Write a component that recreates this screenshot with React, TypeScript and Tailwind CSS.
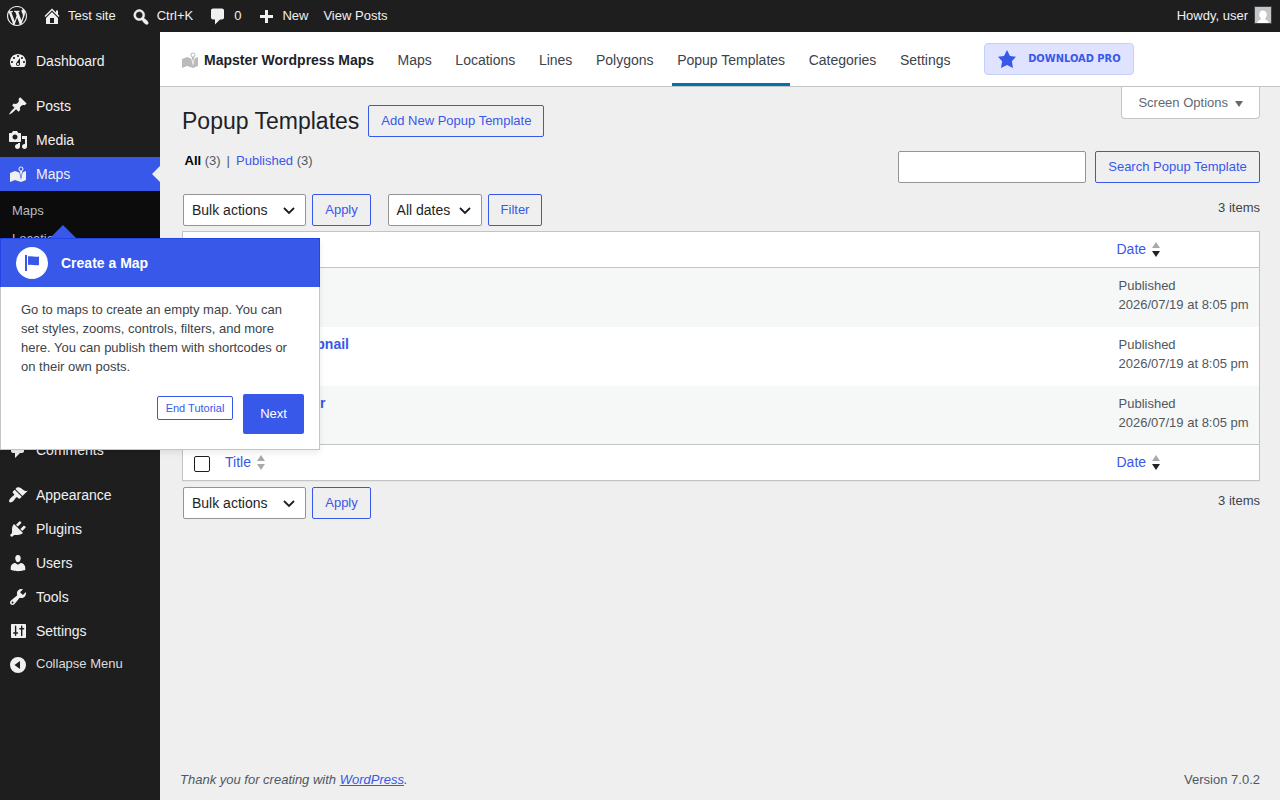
import React from 'react';
import clsx from 'clsx';

const ICONS = {
  wordpress:
    'M20 10c0-5.51-4.49-10-10-10C4.48 0 0 4.49 0 10c0 5.52 4.48 10 10 10 5.51 0 10-4.48 10-10zM7.78 15.37L4.37 6.22c.55-.02 1.17-.08 1.17-.08.5-.06.44-1.13-.06-1.11 0 0-1.45.11-2.37.11-.18 0-.37 0-.58-.01C4.12 2.69 6.87 1.11 10 1.11c2.33 0 4.45.87 6.05 2.34-.68-.11-1.65.39-1.65 1.58 0 .74.45 1.36.9 2.1.35.61.55 1.36.55 2.46 0 1.49-1.4 5-1.4 5l-3.03-8.37c.54-.02.82-.17.82-.17.5-.05.44-1.25-.06-1.22 0 0-1.44.12-2.38.12-.87 0-2.33-.12-2.33-.12-.5-.03-.56 1.2-.06 1.22l.92.08 1.26 3.41zM17.41 10c.24-.64.74-1.87.43-4.25.7 1.29 1.05 2.71 1.05 4.25 0 3.29-1.73 6.24-4.4 7.78.97-2.59 1.94-5.2 2.92-7.78zM6.1 18.09C3.12 16.65 1.11 13.53 1.11 10c0-1.3.23-2.48.72-3.59C3.25 10.3 4.67 14.2 6.1 18.09zm4.03-6.63l2.58 6.98c-.86.29-1.76.45-2.71.45-.79 0-1.57-.11-2.29-.33.81-2.38 1.62-4.74 2.42-7.1z',
  home: 'M16 8.5l1.53 1.53-1.06 1.06L10 4.6l-6.47 6.49-1.06-1.06L10 2.5l4 4v-2h2v4zm-6-2.46l6 5.99V18H4v-5.97zM12 17v-5H8v5h4z',
  search:
    'M12.14 4.18c1.87 1.87 2.11 4.75.72 6.89.12.1.22.21.36.31.2.16.47.36.81.59.34.24.56.39.66.47.42.31.73.57.94.78.32.32.6.65.84 1 .25.35.44.69.59 1.04.14.35.21.68.18 1-.02.32-.14.59-.36.81s-.49.34-.81.36c-.31.02-.65-.04-.99-.19-.35-.14-.7-.34-1.04-.59-.35-.24-.68-.52-1-.84-.21-.21-.47-.52-.77-.93-.1-.13-.25-.35-.47-.66-.22-.32-.4-.57-.56-.78-.16-.2-.29-.35-.44-.5-2.07 1.09-4.69.76-6.44-.98-2.14-2.15-2.14-5.64 0-7.78 2.15-2.15 5.63-2.15 7.78 0zm-1.41 6.36c1.36-1.37 1.36-3.58 0-4.95-1.37-1.37-3.59-1.37-4.95 0-1.37 1.37-1.37 3.58 0 4.95 1.36 1.37 3.58 1.37 4.95 0z',
  comments:
    'M5 2h9c1.1 0 2 .9 2 2v7c0 1.1-.9 2-2 2h-2l-5 5v-5H5c-1.1 0-2-.9-2-2V4c0-1.1.9-2 2-2z',
  plus: 'M17 9v3h-5v5H9v-5H4V9h5V4h3v5z',
  dashboard:
    'M3.76 16h12.48c1.1-1.37 1.76-3.11 1.76-5 0-4.42-3.58-8-8-8s-8 3.58-8 8c0 1.89.66 3.63 1.76 5zM10 4c.55 0 1 .45 1 1s-.45 1-1 1-1-.45-1-1 .45-1 1-1zM6 6c.55 0 1 .45 1 1s-.45 1-1 1-1-.45-1-1 .45-1 1-1zm8 0c.55 0 1 .45 1 1s-.45 1-1 1-1-.45-1-1 .45-1 1-1zm-5.37 5.55L12 7v6c0 1.1-.9 2-2 2s-2-.9-2-2c0-.57.24-1.08.63-1.45zM4 10c.55 0 1 .45 1 1s-.45 1-1 1-1-.45-1-1 .45-1 1-1zm12 0c.55 0 1 .45 1 1s-.45 1-1 1-1-.45-1-1 .45-1 1-1zm-5 3c0-.55-.45-1-1-1s-1 .45-1 1 .45 1 1 1 1-.45 1-1z',
  post: 'M10.44 3.02l1.82-1.82 6.36 6.35-1.83 1.82c-1.05-.68-2.48-.57-3.41.36l-.75.75c-.92.93-1.04 2.35-.35 3.41l-1.83 1.82-2.41-2.41-2.8 2.79c-.42.42-3.38 2.71-3.8 2.29s1.86-3.39 2.28-3.81l2.79-2.79L4.1 9.36l1.83-1.82c1.05.69 2.48.57 3.4-.36l.75-.75c.93-.92 1.05-2.35.36-3.41z',
  media:
    'M13 11V4c0-.55-.45-1-1-1h-1.67L9 1H5L3.67 3H2c-.55 0-1 .45-1 1v7c0 .55.45 1 1 1h10c.55 0 1-.45 1-1zM7 4.5c1.38 0 2.5 1.12 2.5 2.5S8.38 9.5 7 9.5 4.5 8.38 4.5 7 5.62 4.5 7 4.5zM14 6h5v10.5c0 1.38-1.12 2.5-2.5 2.5S14 17.88 14 16.5s1.12-2.5 2.5-2.5c.17 0 .34.02.5.05V9h-3V6zm-4 8.05V13h2v3.5c0 1.38-1.12 2.5-2.5 2.5S7 17.88 7 16.5 8.12 14 9.5 14c.17 0 .34.02.5.05z',
  map: 'M13 13.14l1.17-5.94c.79-.43 1.33-1.25 1.33-2.2 0-1.38-1.12-2.5-2.5-2.5S10.5 3.62 10.5 5c0 .95.54 1.77 1.33 2.2zm0-9.64c.83 0 1.5.67 1.5 1.5s-.67 1.5-1.5 1.5-1.5-.67-1.5-1.5.67-1.5 1.5-1.5zm1.72 4.8L18 6.97v9L13.12 18 7 15.97l-5 2v-9l5-2 4.27 1.41 1.73 7.3z',
  appearance:
    'M14.48 11.06L7.41 3.99l1.5-1.5c.5-.56 2.3-.47 3.51.32 1.21.8 1.43 1.28 2.91 2.1 1.18.64 2.45 1.26 4.45.85zm-.71.71L6.7 4.7 4.93 6.47c-.39.39-.39 1.02 0 1.41l1.06 1.06c.39.39.39 1.03 0 1.42-.6.6-1.43 1.11-2.21 1.69-.35.26-.7.53-1.01.84C1.43 14.23.4 16.08 1.4 17.07c.99 1 2.84-.03 4.18-1.36.31-.31.58-.66.85-1.02.57-.78 1.08-1.61 1.69-2.21.39-.39 1.02-.39 1.41 0l1.06 1.06c.39.39 1.02.39 1.41 0z',
  plugins:
    'M13.11 4.36L9.87 7.6 8 5.73l3.24-3.24c.35-.34 1.05-.2 1.56.32.52.51.66 1.21.31 1.55zm-8 1.77l.91-1.12 9.01 9.01-1.19.84c-.71.71-2.63 1.16-3.82 1.16H6.14L4.9 17.26c-.59.59-1.54.59-2.12 0-.59-.58-.59-1.53 0-2.12l1.24-1.24v-3.88c0-1.13.4-3.19 1.09-3.89zm7.26 3.97l3.24-3.24c.34-.35 1.04-.21 1.55.31.52.51.66 1.21.31 1.55l-3.24 3.25z',
  users:
    'M10 9.25c-2.27 0-2.73-3.44-2.73-3.44C7 4.02 7.82 2 9.97 2c2.16 0 2.98 2.02 2.71 3.81 0 0-.41 3.44-2.68 3.44zm0 2.57L12.72 10c2.39 0 4.52 2.33 4.52 4.53v2.49s-3.65 1.13-7.24 1.13c-3.65 0-7.24-1.13-7.24-1.13v-2.49c0-2.25 1.94-4.48 4.47-4.48z',
  tools:
    'M16.68 9.77c-1.34 1.34-3.3 1.67-4.95.99l-5.41 6.52c-.99.99-2.59.99-3.58 0s-.99-2.59 0-3.57l6.52-5.42c-.68-1.65-.35-3.61.99-4.95 1.28-1.28 3.12-1.62 4.72-1.06l-2.89 2.89 2.82 2.82 2.86-2.87c.53 1.58.18 3.39-1.08 4.65zM3.81 16.21c.4.39 1.04.39 1.43 0 .4-.4.4-1.04 0-1.43-.39-.4-1.03-.4-1.43 0-.39.39-.39 1.03 0 1.43z',
  settings:
    'M18 16V4c0-.55-.45-1-1-1H4c-.55 0-1 .45-1 1v12c0 .55.45 1 1 1h13c.55 0 1-.45 1-1zM8.300 11.300H9.500c.4 0 .7.3.7.7s-.3.700-.7.700H8.300v1.500c0 .4-.3.700-.7.700s-.7-.3-.7-.7v-1.500H5.700c-.4 0-.7-.3-.7-.7s.3-.7.7-.7h1.200V5.200c0-.4.3-.7.7-.7s.7.3.7.7zM13 8.500h-1.200c-.4 0-.7-.3-.7-.7s.3-.7.7-.7H13V5.200c0-.4.3-.7.7-.7s.7.3.7.7v1.900h1.200c.4 0 .7.3.7.7s-.3.700-.7.700h-1.200v6.100c0 .4-.3.700-.7.700s-.7-.3-.7-.7z',
  collapse: 'M10 2a8 8 0 1 0 0 16 8 8 0 0 0 0-16zm2 4v8l-5.500-4z',
  flag: 'M5 18V2H3v16h2zm1-6V3.500c3-.8 7 .8 11 0v8.500c-3 1-8-.6-11 0z',
  star: 'M10 1l3 6 6 .75-4.12 4.62L16 19l-6-3-6 3 1.13-6.63L1 7.75 7 7z',
};

type IconName = keyof typeof ICONS;

const Icon: React.FC<{ name: IconName; className?: string }> = ({ name, className = 'size-5' }) => (
  <svg viewBox="0 0 20 20" fill="currentColor" fillRule="evenodd" className={clsx('shrink-0', className)}>
    <path d={ICONS[name]} />
  </svg>
);

interface MenuItem {
  label: string;
  icon: IconName;
}

const topMenu: MenuItem[] = [
  { label: 'Posts', icon: 'post' },
  { label: 'Media', icon: 'media' },
];

const bottomMenu: MenuItem[] = [
  { label: 'Appearance', icon: 'appearance' },
  { label: 'Plugins', icon: 'plugins' },
  { label: 'Users', icon: 'users' },
  { label: 'Tools', icon: 'tools' },
  { label: 'Settings', icon: 'settings' },
];

const tabs = ['Maps', 'Locations', 'Lines', 'Polygons', 'Popup Templates', 'Categories', 'Settings'];

const templates = ['Default', 'Default Thumbnail', 'Default Header'];

const MenuRow: React.FC<{ item: MenuItem }> = ({ item }) => (
  <a className="flex h-[34px] items-center gap-2 pl-2 text-[14px] text-[#f0f0f1]">
    <Icon name={item.icon} />
    {item.label}
  </a>
);

const AdminBar = () => (
  <header className="flex h-8 items-center bg-[#1e1e1e] pl-[7px] text-[13px] text-[#f0f0f1]">
    <Icon name="wordpress" />
    <span className="ml-[15px] flex items-center gap-1.5">
      <Icon name="home" />
      Test site
    </span>
    <span className="ml-[15px] flex items-center gap-1.5">
      <Icon name="search" className="size-5 translate-y-px stroke-current stroke-[0.4]" />
      Ctrl+K
    </span>
    <span className="ml-[15px] flex items-center gap-1.5">
      <Icon name="comments" className="size-5 translate-y-[0.5px]" />
      0
    </span>
    <span className="ml-[15px] flex items-center gap-1.5">
      <Icon name="plus" />
      New
    </span>
    <span className="ml-[15px]">View Posts</span>
    <span className="mr-2 ml-auto flex items-center gap-1.5">
      Howdy, user
      <svg viewBox="0 0 18 18" className="-mt-0.5 size-[18px]">
        <rect width="18" height="18" fill="#3c434a" />
        <rect x="1" y="1" width="16" height="16" fill="#c5c5c5" />
        <path d="M9 4.5c2.4 0 3.800 1.700 3.800 4 0 1.600-.7 2.900-1.600 3.700v1.200c1.800.5 3.300 1.300 3.600 3.600H3.200c.3-2.300 1.800-3.100 3.600-3.600v-1.200C5.900 11.400 5.200 10.100 5.200 8.500c0-2.300 1.400-4 3.800-4z" fill="#fff" />
      </svg>
    </span>
  </header>
);

const Sidebar = () => (
  <nav className="w-40 shrink-0 bg-[#1e1e1e] pt-3">
    <MenuRow item={{ label: 'Dashboard', icon: 'dashboard' }} />
    <div className="h-[11px]" />
    {topMenu.map((item) => (
      <MenuRow key={item.label} item={item} />
    ))}
    <div className="relative bg-[#3858e9]">
      <MenuRow item={{ label: 'Maps', icon: 'map' }} />
      <span className="absolute top-[9px] right-0 border-y-8 border-r-8 border-y-transparent border-r-[#efefef]" />
    </div>
    <div className="h-[208px] bg-[#0c0c0c] pt-[6px] text-[13px] leading-7 text-[#bbb]">
      <div className="pl-3">Maps</div>
      <div className="pl-3">Locations</div>
    </div>
    <div className="h-[34px]" />
    <MenuRow item={{ label: 'Comments', icon: 'comments' }} />
    <div className="h-[11px]" />
    {bottomMenu.map((item) => (
      <MenuRow key={item.label} item={item} />
    ))}
    <a className="flex h-[34px] items-center gap-2 pl-2 text-[13px] text-[#dcdcdd]">
      <Icon name="collapse" className="size-5 text-[#f0f0f1]" />
      <span className="-mt-0.5">Collapse Menu</span>
    </a>
  </nav>
);

const PluginNav = () => (
  <div className="flex h-[55px] border-b border-[#c3c4c7] bg-white pl-[22px] text-[14px] text-[#3c434a]">
    <div className="flex items-center pt-[3px]">
      <Icon name="map" className="-mt-px -ml-0.5 size-5 text-[#bbb]" />
      <span className="ml-1 font-bold text-[#1d2327]">Mapster Wordpress Maps</span>
    </div>
    <div className="ml-[18.4px] flex gap-[13.6px]">
      {tabs.map((tab) => (
        <a
          key={tab}
          className={clsx(
            'flex items-center border-b-[3px] px-[5px] pt-[5px]',
            tab === 'Popup Templates' ? 'border-[#0073aa]' : 'border-transparent',
          )}
        >
          {tab}
        </a>
      ))}
    </div>
    <a className="mt-[11px] ml-[28.6px] flex h-8 w-[150px] items-center rounded border border-[#c5d0f8] bg-[#dfe3ff] pl-3 text-[#3858e9]">
      <Icon name="star" />
      <span className="ml-[11px] font-['DejaVu_Sans_Condensed','DejaVu_Sans'] text-[11px] font-bold whitespace-nowrap [font-stretch:condensed]">
        DOWNLOAD PRO
      </span>
    </a>
  </div>
);

const Button: React.FC<{ children: React.ReactNode; className?: string }> = ({ children, className }) => (
  <button
    className={clsx(
      'flex h-8 items-center justify-center rounded-[2px] border border-[#3858e9] px-3 text-[13px] whitespace-nowrap text-[#3858e9]',
      className,
    )}
  >
    {children}
  </button>
);

const Select: React.FC<{ label: string; className: string }> = ({ label, className }) => (
  <div
    className={clsx(
      'flex h-8 items-center justify-between rounded-[2px] border border-[#949494] bg-white pr-2.5 pl-2 text-[14px] text-[#1e1e1e]',
      className,
    )}
  >
    {label}
    <svg viewBox="0 0 12 8" className="mt-0.5 h-2 w-3" fill="none" stroke="#1e1e1e" strokeWidth="1.8">
      <path d="M1 1l5 5 5-5" />
    </svg>
  </div>
);

const SortArrows: React.FC<{ active?: boolean }> = ({ active }) => (
  <svg viewBox="0 0 8 15" className="ml-1.5 h-[15px] w-2">
    <path d="M0 6L4 0l4 6z" fill="#a7aaad" />
    <path d="M0 9l4 6 4-6z" fill={active ? '#1d2327' : '#a7aaad'} />
  </svg>
);

const HeadingRow = () => (
  <div className="flex h-[35px] items-center text-[14px] text-[#3858e9]">
    <div className="flex w-[42px] pt-[3px] pl-[11px]">
      <span className="size-4 rounded-[2px] border border-[#1e1e1e] bg-white" />
    </div>
    <div className="flex flex-1 items-center">
      Title
      <SortArrows />
    </div>
    <div className="flex w-[142.5px] items-center">
      Date
      <SortArrows active />
    </div>
  </div>
);

const TemplateTable = () => (
  <div className="border border-[#c3c4c7] bg-white shadow-[0_1px_1px_rgba(0,0,0,0.04)]">
    <div className="border-b border-[#c3c4c7]">
      <HeadingRow />
    </div>
    {templates.map((title, i) => (
      <div
        key={title}
        className={clsx('flex pt-2', i % 2 === 0 && 'bg-[#f6f7f7]', i === 2 ? 'h-[58px]' : 'h-[59px]')}
      >
        <div className="flex-1 pl-[42px]">
          <div className={clsx('text-right text-[14px] leading-[19px] font-bold text-[#3858e9]', i === 2 ? 'w-[100.4px]' : i === 1 ? 'w-[124px]' : 'w-[60px]')}>
            {title}
          </div>
        </div>
        <div className="w-[140.5px] text-[13px] leading-[19px] text-[#50575e]">
          Published
          <br />
          2026/07/19 at 8:05 pm
        </div>
      </div>
    ))}
    <div className="border-t border-[#c3c4c7]">
      <HeadingRow />
    </div>
  </div>
);

const TutorialPointer = () => (
  <div className="absolute top-[238px] left-0 h-[212px] w-80 border border-[#c3c4c7] bg-white shadow-[0_3px_6px_rgba(0,0,0,0.08)]">
    <span className="absolute -top-[14px] left-[49px] border-x-[13px] border-b-[13px] border-x-transparent border-b-[#3858e9]" />
    <div className="-mx-px -mt-px flex h-[49px] items-center border border-b-0 border-[#2145e6] bg-[#3858e9] pl-[15px]">
      <span className="flex size-8 items-center justify-center rounded-full bg-white text-[#3858e9]">
        <Icon name="flag" />
      </span>
      <h3 className="ml-[13px] text-[14px] font-bold text-white">Create a Map</h3>
    </div>
    <p className="mt-[13px] px-5 text-[13px] leading-[19px] text-[#3c434a]">
      Go to maps to create an empty map. You can set styles, zooms, controls, filters, and more here. You can publish
      them with shortcodes or on their own posts.
    </p>
    <div className="mt-[18px] mr-[15px] flex items-start justify-end gap-2.5">
      <button className="mt-0.5 h-6 w-[76px] rounded-[2px] border border-[#3858e9] text-[11px] text-[#3858e9]">
        End Tutorial
      </button>
      <button className="h-10 w-[61px] rounded-[2px] bg-[#3858e9] text-[13px] text-white">Next</button>
    </div>
  </div>
);

const App = () => {
  return (
    <div className="relative h-[800px] w-[1280px] overflow-hidden bg-[#efefef] font-['Liberation_Sans',sans-serif]">
      <AdminBar />
      <div className="flex h-[768px]">
        <Sidebar />
        <main className="flex min-w-0 flex-1 flex-col">
          <PluginNav />
          <div className="flex justify-between pr-5 pl-[22px]">
            <div className="mt-[18px] flex items-center gap-[9px]">
              <h1 className="text-[23px] leading-8 text-[#1d2327]">Popup Templates</h1>
              <Button>Add New Popup Template</Button>
            </div>
            <div className="flex h-8 w-[139px] items-center rounded-b border border-t-0 border-[#c3c4c7] bg-white pl-[16.4px] text-[13px] text-[#646970]">
              Screen Options
              <span className="mt-[3px] ml-[6.6px] border-x-4 border-t-[6px] border-x-transparent border-t-[#646970]" />
            </div>
          </div>
          <div className="mt-3.5 flex items-start pr-5 pl-[24.5px] text-[13px] text-[#50575e]">
            <div className="flex leading-[19px]">
              <b className="mr-[3.6px] text-black">All</b>(3)
              <span className="mx-1.5">|</span>
              <span className="mr-[3.6px] text-[#3858e9]">Published</span>(3)
            </div>
            <div className="ml-auto flex gap-[9px]">
              <input className="h-8 w-[188px] rounded-[2px] border border-[#949494] bg-white" />
              <Button className="w-[165px]">Search Popup Template</Button>
            </div>
          </div>
          <div className="mt-[11px] flex pr-5 pl-[23px]">
            <Select label="Bulk actions" className="w-[123px]" />
            <Button className="ml-1.5 w-[59px]">Apply</Button>
            <Select label="All dates" className="ml-[16.6px] w-[94.4px]" />
            <Button className="ml-1.5 w-[54px]">Filter</Button>
            <span className="mt-1 ml-auto text-[13px] text-[#3c434a]">3 items</span>
          </div>
          <div className="mt-[5px] mr-5 ml-[22px]">
            <TemplateTable />
          </div>
          <div className="mt-1.5 flex pr-5 pl-[23px]">
            <Select label="Bulk actions" className="w-[123px]" />
            <Button className="ml-1.5 w-[59px]">Apply</Button>
            <span className="mt-1 ml-auto text-[13px] text-[#3c434a]">3 items</span>
          </div>
          <footer className="mt-auto flex justify-between pr-5 pb-[11px] pl-5 text-[13px] leading-[19px] text-[#50575e]">
            <i>
              Thank you for creating with <span className="text-[#3858e9] underline">WordPress</span>.
            </i>
            <span>Version 7.0.2</span>
          </footer>
        </main>
      </div>
      <TutorialPointer />
    </div>
  );
};

export default App;
